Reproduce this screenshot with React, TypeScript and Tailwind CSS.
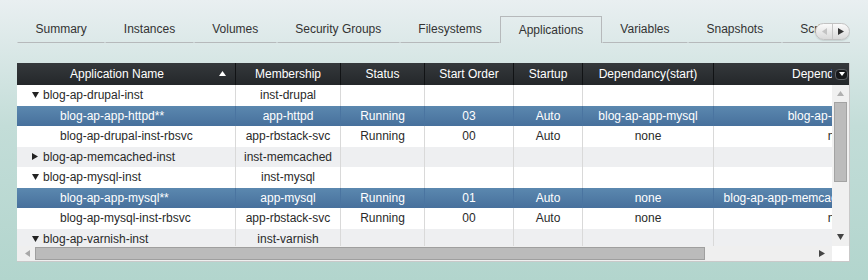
import React from 'react';

const tabs = ['Summary', 'Instances', 'Volumes', 'Security Groups', 'Filesystems', 'Applications', 'Variables', 'Snapshots', 'Scripts'];

const colW = ['w-[219px]', 'w-[105px]', 'w-[84px]', 'w-[89px]', 'w-[69px]', 'w-[131px]', 'w-[254px]'];

const headers = ['Application Name', 'Membership', 'Status', 'Start Order', 'Startup', 'Dependancy(start)', 'Dependancy(stop)'];

type Row = {
	name: string;
	level: 'open' | 'closed' | 'child';
	cells: string[];
	selected?: boolean;
};

const rows: Row[] = [
	{ name: 'blog-ap-drupal-inst', level: 'open', cells: ['inst-drupal', '', '', '', '', ''] },
	{ name: 'blog-ap-app-httpd**', level: 'child', selected: true, cells: ['app-httpd', 'Running', '03', 'Auto', 'blog-ap-app-mysql', 'blog-ap-app-varnish'] },
	{ name: 'blog-ap-drupal-inst-rbsvc', level: 'child', cells: ['app-rbstack-svc', 'Running', '00', 'Auto', 'none', 'none'] },
	{ name: 'blog-ap-memcached-inst', level: 'closed', cells: ['inst-memcached', '', '', '', '', ''] },
	{ name: 'blog-ap-mysql-inst', level: 'open', cells: ['inst-mysql', '', '', '', '', ''] },
	{ name: 'blog-ap-app-mysql**', level: 'child', selected: true, cells: ['app-mysql', 'Running', '01', 'Auto', 'none', 'blog-ap-app-memcached, blog-ap-app-httpd'] },
	{ name: 'blog-ap-mysql-inst-rbsvc', level: 'child', cells: ['app-rbstack-svc', 'Running', '00', 'Auto', 'none', 'none'] },
	{ name: 'blog-ap-varnish-inst', level: 'open', cells: ['inst-varnish', '', '', '', '', ''] },
];

const Down = ({ color = '#222' }: { color?: string }) => (
	<svg width="7" height="6" viewBox="0 0 7 6"><polygon points="0,0 7,0 3.5,6" fill={color} /></svg>
);

const Right = ({ color = '#222' }: { color?: string }) => (
	<svg width="6" height="7" viewBox="0 0 6 7"><polygon points="0,0 6,3.5 0,7" fill={color} /></svg>
);

const Left = ({ color = '#222' }: { color?: string }) => (
	<svg width="5" height="7" viewBox="0 0 5 7"><polygon points="5,0 0,3.5 5,7" fill={color} /></svg>
);

const Up = ({ color = '#222' }: { color?: string }) => (
	<svg width="7" height="5" viewBox="0 0 7 5"><polygon points="0,5 7,5 3.5,0" fill={color} /></svg>
);

const TableRow = ({ row, index }: { row: Row; index: number }) => {
	const bg = row.selected
		? 'bg-linear-to-b from-[#5b88af] to-[#47709c] text-white'
		: index % 2 === 1
			? 'bg-[#eeeff1] text-[#2a2a2a]'
			: 'bg-white text-[#2a2a2a]';
	const line = row.selected ? 'border-[#4a74a0]' : 'border-[#d9d9d9]';
	return (
		<div className={`flex h-[20.5px] shrink-0 ${bg}`}>
			<div className={`${colW[0]} shrink-0 border-r ${line} flex items-center whitespace-nowrap ${row.level === 'child' ? 'pl-[43px]' : 'pl-[15px]'}`}>
				{row.level === 'open' && <span className="mr-[4px] flex"><Down /></span>}
				{row.level === 'closed' && <span className="mr-[5px] flex"><Right /></span>}
				<span>{row.name}</span>
			</div>
			{row.cells.map((c, i) => (
				<div key={i} className={`${colW[i + 1]} shrink-0 ${i < 5 ? `border-r ${line}` : ''} flex items-center justify-center whitespace-nowrap`}>
					{c}
				</div>
			))}
		</div>
	);
};

const App = () => {
	return (
		<div className="w-[868px] h-[280px] overflow-hidden bg-linear-to-b from-[#e9eff1] via-[#c3ddd8] via-45% to-[#b2d5cd] font-['Liberation_Sans',Arial,sans-serif] text-[12px]">
			{/* tab strip */}
			<div className="relative ml-[17px] mt-[16px] w-[833px] h-[27px] flex overflow-hidden">
				{tabs.map(t => (
					<div
						key={t}
						className={`shrink-0 h-full px-[17.5px] pb-[1px] flex items-center text-[#333] border-x border-t ${t === 'Applications' ? 'border-[#b6b9bb]' : 'border-x-transparent border-t-transparent border-b border-b-[#b6b9bb]'}`}
					>
						{t}
					</div>
				))}
				<div className="absolute right-0 top-[7px] w-[35px] h-[17px] rounded-full border border-[#c2c2c2] bg-linear-to-b from-[#fafafa] to-[#dadada] flex shadow-[0_1px_1px_rgba(0,0,0,0.1)]">
					<div className="flex-1 flex items-center justify-center border-r border-[#c6c6c6]"><Left color="#c4c4c4" /></div>
					<div className="flex-1 flex items-center justify-center"><Right color="#333" /></div>
				</div>
			</div>

			{/* grid */}
			<div className="ml-[17px] mt-[20px] w-[833px] border-r border-b border-[#c9c9c9] bg-white">
				<div className="flex h-[22px] bg-linear-to-b from-[#35393c] to-[#24272a] text-white">
					<div className="w-[815px] flex overflow-hidden">
						{headers.map((h, i) => (
							<div
								key={h}
								className={`${colW[i]} shrink-0 relative flex items-center justify-center whitespace-nowrap ${i < 6 ? 'border-r border-[#111315]' : ''} ${i === 0 ? 'pr-[18px]' : ''}`}
							>
								{h}
								{i === 0 && (
									<span className="absolute right-[9px] top-[8px] flex"><Up color="#fff" /></span>
								)}
							</div>
						))}
					</div>
					<div className="w-[17px] flex items-center pl-[3px]">
						<div className="w-[13px] h-[11px] rounded-[4px] bg-[#16181a] border border-[#5c6064] flex items-center justify-center">
							<svg width="6" height="4" viewBox="0 0 6 4"><polygon points="0,0 6,0 3,4" fill="#fff" /></svg>
						</div>
					</div>
				</div>

				<div className="flex">
					<div className="w-[815px] flex flex-col">
						<div className="h-[161px] overflow-hidden flex flex-col">
							{rows.map((r, i) => (
								<TableRow key={r.name} row={r} index={i} />
							))}
						</div>
						<div className="h-[15px] bg-[#efefef] flex items-center">
							<div className="w-[18px] flex justify-center pl-[2px]"><Left color="#a8a8a8" /></div>
							<div className="w-[670px] h-[13px] border border-[#9f9f9f] bg-[#bbbbbb]" />
							<div className="ml-auto mr-[7px] flex"><Right color="#444" /></div>
						</div>
					</div>
					<div className="w-[17px] flex flex-col">
						<div className="h-[161px] bg-[#f0f0f0] flex flex-col items-center">
							<div className="h-[17px] flex items-center"><Up color="#b0b0b0" /></div>
							<div className="w-[13px] h-[80px] border border-[#a3a3a3] bg-[#bcbcbc]" />
							<div className="mt-auto h-[19px] flex items-center"><Down color="#444" /></div>
						</div>
						<div className="h-[15px] bg-white" />
					</div>
				</div>
			</div>
		</div>
	);
};

export default App;
